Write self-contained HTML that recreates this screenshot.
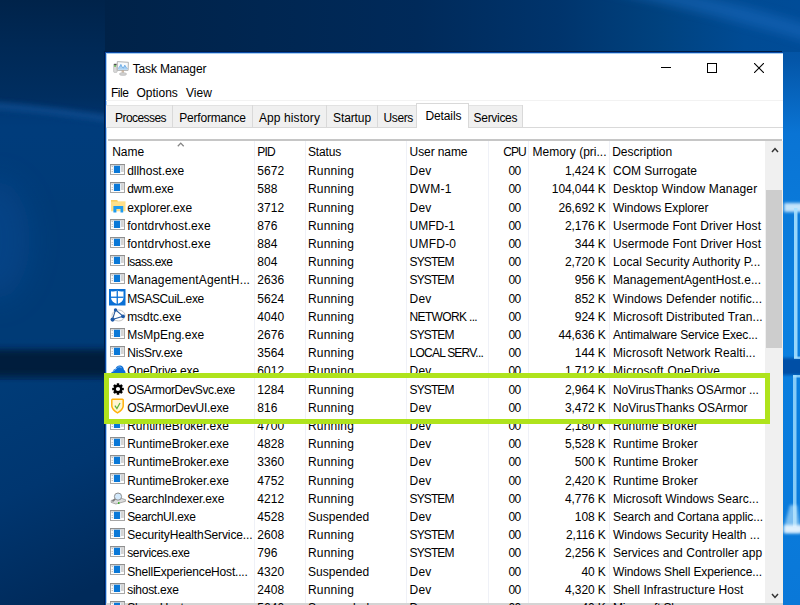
<!DOCTYPE html>
<html><head><meta charset="utf-8">
<style>
*{margin:0;padding:0;box-sizing:border-box}
html,body{width:800px;height:605px;overflow:hidden}
body{position:relative;font-family:"Liberation Sans",sans-serif;font-size:12px;color:#000;background:#0a4284}
.bg{position:absolute;left:0;top:0;width:800px;height:605px}
.win{position:absolute;left:105px;top:52px;width:678px;height:560px;background:#fff;border-left:1px solid #0a4aa6;border-top:1px solid #0a4aa6;box-shadow:-1px -1px 0 #001c44, inset 1px 1px 0 #a6cdf2}
.t{position:absolute;white-space:nowrap;line-height:12px;font-size:12px;color:#000}
.r{text-align:right}
.ln{position:absolute}
svg{position:absolute;display:block}
</style></head>
<body>
<svg class="bg" width="800" height="605" viewBox="0 0 800 605" style="left:0;top:0">
<defs>
<linearGradient id="gtop" gradientUnits="userSpaceOnUse" x1="105" y1="0" x2="800" y2="0">
<stop offset="0" stop-color="#002248"/><stop offset="0.45" stop-color="#002a5a"/><stop offset="0.65" stop-color="#00346c"/><stop offset="0.8" stop-color="#00427f"/><stop offset="0.92" stop-color="#004b94"/><stop offset="1" stop-color="#004c98"/>
</linearGradient>
<linearGradient id="gtopv" x1="0" y1="0" x2="0" y2="1">
<stop offset="0" stop-color="#001a3c" stop-opacity="0.35"/><stop offset="1" stop-color="#001a3c" stop-opacity="0"/>
</linearGradient>
<linearGradient id="gl" gradientUnits="userSpaceOnUse" x1="0" y1="0" x2="0" y2="605">
<stop offset="0" stop-color="#00234a"/><stop offset="0.08" stop-color="#002956"/><stop offset="0.16" stop-color="#002e60"/><stop offset="0.21" stop-color="#003570"/><stop offset="0.35" stop-color="#003468"/><stop offset="1" stop-color="#003264"/>
</linearGradient>
<linearGradient id="gll" x1="0" y1="0" x2="0.3" y2="1">
<stop offset="0" stop-color="#003c78"/><stop offset="0.5" stop-color="#003670"/><stop offset="1" stop-color="#002a5a"/>
</linearGradient>
<linearGradient id="gr" x1="0" y1="0" x2="0" y2="1">
<stop offset="0" stop-color="#004c98"/><stop offset="0.1" stop-color="#0456a8"/><stop offset="0.22" stop-color="#0a74d4"/><stop offset="0.5" stop-color="#0a80e0"/><stop offset="1" stop-color="#0a78d8"/>
</linearGradient>
<filter id="bl" x="-50%" y="-50%" width="200%" height="200%"><feGaussianBlur stdDeviation="5"/></filter>
<filter id="bl3" x="-50%" y="-50%" width="200%" height="200%"><feGaussianBlur stdDeviation="3"/></filter>
<filter id="bl15" x="-100%" y="-100%" width="300%" height="300%"><feGaussianBlur stdDeviation="15"/></filter>
<filter id="bl1" x="-50%" y="-50%" width="200%" height="200%"><feGaussianBlur stdDeviation="0.7"/></filter>
<filter id="bl2" x="-50%" y="-50%" width="200%" height="200%"><feGaussianBlur stdDeviation="1.5"/></filter>
</defs>
<rect x="0" y="0" width="110" height="605" fill="url(#gl)"/>
<path d="M-20 105 Q50 110 130 123 L130 350 L-20 350 Z" fill="#00448a" opacity="0.45" filter="url(#bl)"/>
<ellipse cx="-5" cy="240" rx="35" ry="60" fill="#0a4e98" opacity="0.45" filter="url(#bl15)"/>
<path d="M-20 104.5 Q50 109.5 130 122" fill="none" stroke="#1e64b0" stroke-width="5" opacity="0.6" filter="url(#bl3)"/>
<rect x="-20" y="380" width="150" height="240" fill="url(#gll)"/>
<rect x="-20" y="350" width="150" height="26" fill="#001a3a" opacity="0.95" filter="url(#bl3)"/>
<rect x="780" y="0" width="25" height="605" fill="url(#gr)"/>
<rect x="780" y="358" width="25" height="17" fill="#0350a6" filter="url(#bl2)"/>
<rect x="784" y="203" width="20" height="9" fill="#d8f0ff" opacity="0.9" filter="url(#bl2)"/>
<rect x="794" y="208" width="3.5" height="150" fill="#a6e0ff" opacity="0.9" filter="url(#bl1)"/>
<rect x="794" y="356.5" width="8" height="2.5" fill="#a6e0ff" opacity="0.8" filter="url(#bl1)"/>
<rect x="793" y="375" width="3.5" height="152" fill="#a6e0ff" opacity="0.8" filter="url(#bl1)"/>
<rect x="793" y="375" width="8" height="2.5" fill="#a6e0ff" opacity="0.8" filter="url(#bl1)"/>
<path d="M790 505 L797 505 L800 527 L800 533 L784 533 L784 527 Z" fill="#c8ecff" opacity="0.6" filter="url(#bl2)"/>
<rect x="784" y="525" width="20" height="8" fill="#eaf6ff" opacity="0.9" filter="url(#bl2)"/>
<rect x="105" y="0" width="700" height="52" fill="url(#gtop)"/>
<path d="M600 -10 Q700 10 820 45 L820 28 Q720 -2 670 -10Z" fill="#1e6cc0" opacity="0.5" filter="url(#bl)"/>
</svg>
<div class="win"></div>
<svg style="left:113px;top:60.5px" width="16" height="15" viewBox="0 0 16 15">
<rect x="0.6" y="2.8" width="3.6" height="8.6" rx="0.8" fill="#d9d9d9" stroke="#a8a8a8" stroke-width="0.5"/>
<rect x="1.1" y="3.1" width="2.4" height="1.1" fill="#3a3a3a"/><rect x="1.3" y="4.3" width="1.5" height="1.4" fill="#3cb521"/>
<path d="M4.3 0.6 L15.4 1.3 L15.1 9.4 L4.3 9.4 Z" fill="#f6f9fc" stroke="#a9a9a9" stroke-width="0.9"/>
<path d="M5.2 7.2 L6.6 6 L7.9 3.4 L9.1 6.2 L10.4 7 L11.8 4.2 L13.2 6.4 L14.4 7.6 V8.8 H5.2 Z" fill="#a9d0f2"/>
<path d="M5.2 7.2 L6.6 6 L7.9 3.4 L9.1 6.2 L10.4 7 L11.8 4.2 L13.2 6.4 L14.4 7.6" fill="none" stroke="#4a98de" stroke-width="0.7"/>
<rect x="8.6" y="9.4" width="2.4" height="2.4" fill="#c0a080" opacity="0.7"/>
<ellipse cx="10" cy="13" rx="3.6" ry="1.5" fill="#cfcfcf" stroke="#aaa" stroke-width="0.4"/>
</svg>
<div class="t" style="left:132.7px;top:63.04px;font-size:12px;line-height:12px;color:#000;letter-spacing:-0.15px">Task Manager</div>
<div class="ln" style="left:661px;top:67px;width:10px;height:1px;background:#000"></div>
<div class="ln" style="left:707px;top:62.5px;width:10px;height:10px;border:1px solid #000"></div>
<svg style="left:754px;top:62.5px" width="10" height="10" viewBox="0 0 10 10"><path d="M0 0 L10 10 M10 0 L0 10" stroke="#000" stroke-width="1.1"/></svg>
<div class="t" style="left:111px;top:87.04px;font-size:12px;line-height:12px;color:#000;letter-spacing:-0.5px">File</div>
<div class="t" style="left:136.5px;top:87.04px;font-size:12px;line-height:12px;color:#000;">Options</div>
<div class="t" style="left:186px;top:87.04px;font-size:12px;line-height:12px;color:#000;">View</div>
<div class="ln" style="left:106px;top:100px;width:677px;height:1px;background:#f2f2f2"></div>
<div class="ln" style="left:106px;top:105px;width:66px;height:22px;background:#f0f0f0"></div>
<div class="ln" style="left:106px;top:105px;width:66px;height:1px;background:#e2e2e2"></div>
<div class="ln" style="left:172px;top:105px;width:1px;height:22px;background:#d9d9d9"></div>
<div class="t" style="left:115px;top:111.84px;font-size:12px;line-height:12px;color:#000;letter-spacing:-0.56px">Processes</div>
<div class="ln" style="left:173px;top:105px;width:79px;height:22px;background:#f0f0f0"></div>
<div class="ln" style="left:173px;top:105px;width:79px;height:1px;background:#e2e2e2"></div>
<div class="ln" style="left:252px;top:105px;width:1px;height:22px;background:#d9d9d9"></div>
<div class="t" style="left:179.25px;top:111.84px;font-size:12px;line-height:12px;color:#000;letter-spacing:-0.2px">Performance</div>
<div class="ln" style="left:253px;top:105px;width:73px;height:22px;background:#f0f0f0"></div>
<div class="ln" style="left:253px;top:105px;width:73px;height:1px;background:#e2e2e2"></div>
<div class="ln" style="left:326px;top:105px;width:1px;height:22px;background:#d9d9d9"></div>
<div class="t" style="left:259px;top:111.84px;font-size:12px;line-height:12px;color:#000;letter-spacing:0.09px">App history</div>
<div class="ln" style="left:327px;top:105px;width:50px;height:22px;background:#f0f0f0"></div>
<div class="ln" style="left:327px;top:105px;width:50px;height:1px;background:#e2e2e2"></div>
<div class="ln" style="left:377px;top:105px;width:1px;height:22px;background:#d9d9d9"></div>
<div class="t" style="left:333px;top:111.84px;font-size:12px;line-height:12px;color:#000;letter-spacing:-0.1px">Startup</div>
<div class="ln" style="left:378px;top:105px;width:38px;height:22px;background:#f0f0f0"></div>
<div class="ln" style="left:378px;top:105px;width:38px;height:1px;background:#e2e2e2"></div>
<div class="ln" style="left:416px;top:105px;width:1px;height:22px;background:#d9d9d9"></div>
<div class="t" style="left:383.6px;top:111.84px;font-size:12px;line-height:12px;color:#000;letter-spacing:-0.43px">Users</div>
<div class="ln" style="left:469px;top:105px;width:53px;height:22px;background:#f0f0f0"></div>
<div class="ln" style="left:469px;top:105px;width:53px;height:1px;background:#e2e2e2"></div>
<div class="ln" style="left:522px;top:105px;width:1px;height:22px;background:#d9d9d9"></div>
<div class="t" style="left:473.6px;top:111.84px;font-size:12px;line-height:12px;color:#000;letter-spacing:-0.31px">Services</div>
<div class="ln" style="left:106px;top:127px;width:677px;height:1px;background:#d9d9d9"></div>
<div class="ln" style="left:416px;top:103px;width:53px;height:25px;background:#fff;border:1px solid #d9d9d9;border-bottom:none"></div>
<div class="t" style="left:425.4px;top:109.74px;font-size:12px;line-height:12px;color:#000;letter-spacing:-0.1px">Details</div>
<div class="ln" style="left:108px;top:139px;width:674px;height:2px;background:#c6c6c6"></div>
<div class="ln" style="left:254px;top:141px;width:1px;height:470px;background:#eff1f7"></div>
<div class="ln" style="left:305px;top:141px;width:1px;height:470px;background:#eff1f7"></div>
<div class="ln" style="left:406px;top:141px;width:1px;height:470px;background:#eff1f7"></div>
<div class="ln" style="left:488px;top:141px;width:1px;height:470px;background:#eff1f7"></div>
<div class="ln" style="left:528px;top:141px;width:1px;height:470px;background:#eff1f7"></div>
<div class="ln" style="left:609px;top:141px;width:1px;height:470px;background:#eff1f7"></div>
<div class="t" style="left:112.2px;top:146.24px;font-size:12px;line-height:12px;color:#000;">Name</div>
<svg style="left:177px;top:141.5px" width="8" height="5" viewBox="0 0 8 5"><path d="M0.8 4.2 L3.75 1.1 L6.7 4.2" fill="none" stroke="#858585" stroke-width="1.3"/></svg>
<div class="t" style="left:257.2px;top:146.24px;font-size:12px;line-height:12px;color:#000;letter-spacing:-0.75px">PID</div>
<div class="t" style="left:307.9px;top:146.24px;font-size:12px;line-height:12px;color:#000;letter-spacing:-0.15px">Status</div>
<div class="t" style="left:409.6px;top:146.24px;font-size:12px;line-height:12px;color:#000;letter-spacing:-0.1px">User name</div>
<div class="t r" style="left:325.9px;width:200px;top:146.24px;font-size:12px;line-height:12px;color:#000;letter-spacing:-0.9px">CPU</div>
<div class="t" style="left:532.5px;top:146.24px;font-size:12px;line-height:12px;color:#000;">Memory (pri...</div>
<div class="t" style="left:612.2px;top:146.24px;font-size:12px;line-height:12px;color:#000;">Description</div>
<div class="ln" style="left:765px;top:141px;width:17px;height:470px;background:#f0f0f0"></div>
<div class="ln" style="left:766px;top:190px;width:16px;height:158px;background:#cdcdcd"></div>
<div class="ln" style="left:782px;top:141px;width:1px;height:470px;background:#f8efe4"></div>
<svg style="left:771px;top:146.5px" width="8" height="6" viewBox="0 0 8 6"><path d="M1 5 L4 1.6 L7 5" fill="none" stroke="#333" stroke-width="1.5"/></svg>
<svg style="left:771px;top:593px" width="8" height="6" viewBox="0 0 8 6"><path d="M1 1 L4 4.4 L7 1" fill="none" stroke="#333" stroke-width="1.5"/></svg>
<div class="ln" style="left:106px;top:603px;width:677px;height:2px;background:#d4d4d4"></div>
<svg style="left:110.2px;top:164.00px" width="15" height="11" viewBox="0 0 15 11"><rect x="0.5" y="0.5" width="14" height="10" fill="#fdfdfd" stroke="#a6a6a6"/><rect x="0" y="0" width="15" height="1.3" fill="#8f8f8f"/><rect x="3.9" y="1.75" width="6.2" height="7.25" fill="#0a78d7"/><rect x="11" y="1.5" width="2.75" height="6.5" fill="#d4d4d4"/><circle cx="2.2" cy="2.6" r="0.55" fill="#9a9a9a"/><circle cx="2.2" cy="5.2" r="0.55" fill="#9a9a9a"/><circle cx="2.2" cy="7.6" r="0.55" fill="#9a9a9a"/></svg>
<div class="t" style="left:127.2px;top:165.24px;font-size:12px;line-height:12px;color:#000;letter-spacing:-0.030px">dllhost.exe</div>
<div class="t" style="left:257.2px;top:165.24px;font-size:12px;line-height:12px;color:#000;letter-spacing:0.1px">5672</div>
<div class="t" style="left:307.9px;top:165.24px;font-size:12px;line-height:12px;color:#000;letter-spacing:0.217px">Running</div>
<div class="t" style="left:409.6px;top:165.24px;font-size:12px;line-height:12px;color:#000;letter-spacing:0.150px">Dev</div>
<div class="t r" style="left:320.5px;width:200px;top:165.24px;font-size:12px;line-height:12px;color:#000;letter-spacing:-0.7px">00</div>
<div class="t r" style="left:405.70000000000005px;width:200px;top:165.24px;font-size:12px;line-height:12px;color:#000;letter-spacing:-0.1px">1,424 K</div>
<div class="t" style="left:613px;top:165.24px;font-size:12px;line-height:12px;color:#000;letter-spacing:0.000px">COM Surrogate</div>
<svg style="left:110.2px;top:182.20px" width="15" height="11" viewBox="0 0 15 11"><rect x="0.5" y="0.5" width="14" height="10" fill="#fdfdfd" stroke="#a6a6a6"/><rect x="0" y="0" width="15" height="1.3" fill="#8f8f8f"/><rect x="3.9" y="1.75" width="6.2" height="7.25" fill="#0a78d7"/><rect x="11" y="1.5" width="2.75" height="6.5" fill="#d4d4d4"/><circle cx="2.2" cy="2.6" r="0.55" fill="#9a9a9a"/><circle cx="2.2" cy="5.2" r="0.55" fill="#9a9a9a"/><circle cx="2.2" cy="7.6" r="0.55" fill="#9a9a9a"/></svg>
<div class="t" style="left:127.2px;top:183.44px;font-size:12px;line-height:12px;color:#000;letter-spacing:-0.250px">dwm.exe</div>
<div class="t" style="left:257.2px;top:183.44px;font-size:12px;line-height:12px;color:#000;letter-spacing:0.1px">588</div>
<div class="t" style="left:307.9px;top:183.44px;font-size:12px;line-height:12px;color:#000;letter-spacing:0.217px">Running</div>
<div class="t" style="left:409.6px;top:183.44px;font-size:12px;line-height:12px;color:#000;letter-spacing:0.275px">DWM-1</div>
<div class="t r" style="left:320.5px;width:200px;top:183.44px;font-size:12px;line-height:12px;color:#000;letter-spacing:-0.7px">00</div>
<div class="t r" style="left:405.70000000000005px;width:200px;top:183.44px;font-size:12px;line-height:12px;color:#000;letter-spacing:-0.1px">104,044 K</div>
<div class="t" style="left:613px;top:183.44px;font-size:12px;line-height:12px;color:#000;letter-spacing:0.162px">Desktop Window Manager</div>
<svg style="left:110.5px;top:200.00px" width="15" height="13" viewBox="0 0 15 13"><path d="M0 0.3 h6.3 l0.9 2 h-7.2z" fill="#f6bd2a"/><rect x="0" y="1.3" width="14.5" height="10" fill="#ffe08a"/><path d="M2.4 6 h9.8 v6.5 h-2.7 v-3.6 h-4.1 v3.6 h-3z" fill="#1e9bf0"/></svg>
<div class="t" style="left:127.2px;top:201.64px;font-size:12px;line-height:12px;color:#000;letter-spacing:-0.027px">explorer.exe</div>
<div class="t" style="left:257.2px;top:201.64px;font-size:12px;line-height:12px;color:#000;letter-spacing:0.1px">3712</div>
<div class="t" style="left:307.9px;top:201.64px;font-size:12px;line-height:12px;color:#000;letter-spacing:0.217px">Running</div>
<div class="t" style="left:409.6px;top:201.64px;font-size:12px;line-height:12px;color:#000;letter-spacing:0.150px">Dev</div>
<div class="t r" style="left:320.5px;width:200px;top:201.64px;font-size:12px;line-height:12px;color:#000;letter-spacing:-0.7px">00</div>
<div class="t r" style="left:405.70000000000005px;width:200px;top:201.64px;font-size:12px;line-height:12px;color:#000;letter-spacing:-0.1px">26,692 K</div>
<div class="t" style="left:613px;top:201.64px;font-size:12px;line-height:12px;color:#000;letter-spacing:-0.087px">Windows Explorer</div>
<svg style="left:110.2px;top:218.60px" width="15" height="11" viewBox="0 0 15 11"><rect x="0.5" y="0.5" width="14" height="10" fill="#fdfdfd" stroke="#a6a6a6"/><rect x="0" y="0" width="15" height="1.3" fill="#8f8f8f"/><rect x="3.9" y="1.75" width="6.2" height="7.25" fill="#0a78d7"/><rect x="11" y="1.5" width="2.75" height="6.5" fill="#d4d4d4"/><circle cx="2.2" cy="2.6" r="0.55" fill="#9a9a9a"/><circle cx="2.2" cy="5.2" r="0.55" fill="#9a9a9a"/><circle cx="2.2" cy="7.6" r="0.55" fill="#9a9a9a"/></svg>
<div class="t" style="left:127.2px;top:219.84px;font-size:12px;line-height:12px;color:#000;letter-spacing:0.100px">fontdrvhost.exe</div>
<div class="t" style="left:257.2px;top:219.84px;font-size:12px;line-height:12px;color:#000;letter-spacing:0.1px">876</div>
<div class="t" style="left:307.9px;top:219.84px;font-size:12px;line-height:12px;color:#000;letter-spacing:0.217px">Running</div>
<div class="t" style="left:409.6px;top:219.84px;font-size:12px;line-height:12px;color:#000;letter-spacing:-0.020px">UMFD-1</div>
<div class="t r" style="left:320.5px;width:200px;top:219.84px;font-size:12px;line-height:12px;color:#000;letter-spacing:-0.7px">00</div>
<div class="t r" style="left:405.70000000000005px;width:200px;top:219.84px;font-size:12px;line-height:12px;color:#000;letter-spacing:-0.1px">2,176 K</div>
<div class="t" style="left:613px;top:219.84px;font-size:12px;line-height:12px;color:#000;letter-spacing:0.083px">Usermode Font Driver Host</div>
<svg style="left:110.2px;top:236.80px" width="15" height="11" viewBox="0 0 15 11"><rect x="0.5" y="0.5" width="14" height="10" fill="#fdfdfd" stroke="#a6a6a6"/><rect x="0" y="0" width="15" height="1.3" fill="#8f8f8f"/><rect x="3.9" y="1.75" width="6.2" height="7.25" fill="#0a78d7"/><rect x="11" y="1.5" width="2.75" height="6.5" fill="#d4d4d4"/><circle cx="2.2" cy="2.6" r="0.55" fill="#9a9a9a"/><circle cx="2.2" cy="5.2" r="0.55" fill="#9a9a9a"/><circle cx="2.2" cy="7.6" r="0.55" fill="#9a9a9a"/></svg>
<div class="t" style="left:127.2px;top:238.04px;font-size:12px;line-height:12px;color:#000;letter-spacing:0.100px">fontdrvhost.exe</div>
<div class="t" style="left:257.2px;top:238.04px;font-size:12px;line-height:12px;color:#000;letter-spacing:0.1px">884</div>
<div class="t" style="left:307.9px;top:238.04px;font-size:12px;line-height:12px;color:#000;letter-spacing:0.217px">Running</div>
<div class="t" style="left:409.6px;top:238.04px;font-size:12px;line-height:12px;color:#000;letter-spacing:0.220px">UMFD-0</div>
<div class="t r" style="left:320.5px;width:200px;top:238.04px;font-size:12px;line-height:12px;color:#000;letter-spacing:-0.7px">00</div>
<div class="t r" style="left:405.70000000000005px;width:200px;top:238.04px;font-size:12px;line-height:12px;color:#000;letter-spacing:-0.1px">344 K</div>
<div class="t" style="left:613px;top:238.04px;font-size:12px;line-height:12px;color:#000;letter-spacing:0.083px">Usermode Font Driver Host</div>
<svg style="left:110.2px;top:255.00px" width="15" height="11" viewBox="0 0 15 11"><rect x="0.5" y="0.5" width="14" height="10" fill="#fdfdfd" stroke="#a6a6a6"/><rect x="0" y="0" width="15" height="1.3" fill="#8f8f8f"/><rect x="3.9" y="1.75" width="6.2" height="7.25" fill="#0a78d7"/><rect x="11" y="1.5" width="2.75" height="6.5" fill="#d4d4d4"/><circle cx="2.2" cy="2.6" r="0.55" fill="#9a9a9a"/><circle cx="2.2" cy="5.2" r="0.55" fill="#9a9a9a"/><circle cx="2.2" cy="7.6" r="0.55" fill="#9a9a9a"/></svg>
<div class="t" style="left:127.2px;top:256.24px;font-size:12px;line-height:12px;color:#000;letter-spacing:-0.538px">lsass.exe</div>
<div class="t" style="left:257.2px;top:256.24px;font-size:12px;line-height:12px;color:#000;letter-spacing:0.1px">804</div>
<div class="t" style="left:307.9px;top:256.24px;font-size:12px;line-height:12px;color:#000;letter-spacing:0.217px">Running</div>
<div class="t" style="left:409.6px;top:256.24px;font-size:12px;line-height:12px;color:#000;letter-spacing:-0.900px">SYSTEM</div>
<div class="t r" style="left:320.5px;width:200px;top:256.24px;font-size:12px;line-height:12px;color:#000;letter-spacing:-0.7px">00</div>
<div class="t r" style="left:405.70000000000005px;width:200px;top:256.24px;font-size:12px;line-height:12px;color:#000;letter-spacing:-0.1px">2,720 K</div>
<div class="t" style="left:613px;top:256.24px;font-size:12px;line-height:12px;color:#000;letter-spacing:0.079px">Local Security Authority P...</div>
<svg style="left:110.2px;top:273.20px" width="15" height="11" viewBox="0 0 15 11"><rect x="0.5" y="0.5" width="14" height="10" fill="#fdfdfd" stroke="#a6a6a6"/><rect x="0" y="0" width="15" height="1.3" fill="#8f8f8f"/><rect x="3.9" y="1.75" width="6.2" height="7.25" fill="#0a78d7"/><rect x="11" y="1.5" width="2.75" height="6.5" fill="#d4d4d4"/><circle cx="2.2" cy="2.6" r="0.55" fill="#9a9a9a"/><circle cx="2.2" cy="5.2" r="0.55" fill="#9a9a9a"/><circle cx="2.2" cy="7.6" r="0.55" fill="#9a9a9a"/></svg>
<div class="t" style="left:127.2px;top:274.44px;font-size:12px;line-height:12px;color:#000;letter-spacing:0.150px">ManagementAgentH...</div>
<div class="t" style="left:257.2px;top:274.44px;font-size:12px;line-height:12px;color:#000;letter-spacing:0.1px">2636</div>
<div class="t" style="left:307.9px;top:274.44px;font-size:12px;line-height:12px;color:#000;letter-spacing:0.217px">Running</div>
<div class="t" style="left:409.6px;top:274.44px;font-size:12px;line-height:12px;color:#000;letter-spacing:-0.900px">SYSTEM</div>
<div class="t r" style="left:320.5px;width:200px;top:274.44px;font-size:12px;line-height:12px;color:#000;letter-spacing:-0.7px">00</div>
<div class="t r" style="left:405.70000000000005px;width:200px;top:274.44px;font-size:12px;line-height:12px;color:#000;letter-spacing:-0.1px">956 K</div>
<div class="t" style="left:613px;top:274.44px;font-size:12px;line-height:12px;color:#000;letter-spacing:0.087px">ManagementAgentHost.e...</div>
<svg style="left:109.3px;top:289.00px" width="17" height="17" viewBox="0 0 17 17"><rect x="0" y="0" width="16.5" height="16.5" fill="#0a70d6"/><path d="M2 2.3 q3 0.6 6.25 -0.6 q3.25 1.2 6.25 0.6 v6.7 q-0.6 4.3 -6.25 6 q-5.65 -1.7 -6.25 -6z" fill="#fff"/><rect x="7.6" y="1.8" width="1.3" height="13.5" fill="#0a70d6"/><rect x="2" y="7.6" width="12.5" height="1.3" fill="#0a70d6"/></svg>
<div class="t" style="left:127.2px;top:292.64px;font-size:12px;line-height:12px;color:#000;letter-spacing:-0.400px">MSASCuiL.exe</div>
<div class="t" style="left:257.2px;top:292.64px;font-size:12px;line-height:12px;color:#000;letter-spacing:0.1px">5624</div>
<div class="t" style="left:307.9px;top:292.64px;font-size:12px;line-height:12px;color:#000;letter-spacing:0.217px">Running</div>
<div class="t" style="left:409.6px;top:292.64px;font-size:12px;line-height:12px;color:#000;letter-spacing:0.150px">Dev</div>
<div class="t r" style="left:320.5px;width:200px;top:292.64px;font-size:12px;line-height:12px;color:#000;letter-spacing:-0.7px">00</div>
<div class="t r" style="left:405.70000000000005px;width:200px;top:292.64px;font-size:12px;line-height:12px;color:#000;letter-spacing:-0.1px">852 K</div>
<div class="t" style="left:613px;top:292.64px;font-size:12px;line-height:12px;color:#000;letter-spacing:0.115px">Windows Defender notific...</div>
<svg style="left:110px;top:307.50px" width="16" height="15" viewBox="0 0 16 15"><ellipse cx="8.5" cy="7.5" rx="6.5" ry="5.5" fill="none" stroke="#b8b8b8" stroke-width="0.8"/><path d="M5.5 1.8 L2.5 11.5 L13 8.2 Z" fill="none" stroke="#2a5c9c" stroke-width="1.1"/><circle cx="5.5" cy="2" r="1.7" fill="#1e5aa8"/><circle cx="2.6" cy="11.6" r="2.1" fill="#1e5aa8"/><circle cx="13" cy="8.3" r="1.9" fill="#1e5aa8"/></svg>
<div class="t" style="left:127.2px;top:310.84px;font-size:12px;line-height:12px;color:#000;letter-spacing:-0.062px">msdtc.exe</div>
<div class="t" style="left:257.2px;top:310.84px;font-size:12px;line-height:12px;color:#000;letter-spacing:0.1px">4040</div>
<div class="t" style="left:307.9px;top:310.84px;font-size:12px;line-height:12px;color:#000;letter-spacing:0.217px">Running</div>
<div class="t" style="left:409.6px;top:310.84px;font-size:12px;line-height:12px;color:#000;letter-spacing:-0.660px">NETWORK ...</div>
<div class="t r" style="left:320.5px;width:200px;top:310.84px;font-size:12px;line-height:12px;color:#000;letter-spacing:-0.7px">00</div>
<div class="t r" style="left:405.70000000000005px;width:200px;top:310.84px;font-size:12px;line-height:12px;color:#000;letter-spacing:-0.1px">924 K</div>
<div class="t" style="left:613px;top:310.84px;font-size:12px;line-height:12px;color:#000;letter-spacing:0.107px">Microsoft Distributed Tran...</div>
<svg style="left:110.2px;top:327.80px" width="15" height="11" viewBox="0 0 15 11"><rect x="0.5" y="0.5" width="14" height="10" fill="#fdfdfd" stroke="#a6a6a6"/><rect x="0" y="0" width="15" height="1.3" fill="#8f8f8f"/><rect x="3.9" y="1.75" width="6.2" height="7.25" fill="#0a78d7"/><rect x="11" y="1.5" width="2.75" height="6.5" fill="#d4d4d4"/><circle cx="2.2" cy="2.6" r="0.55" fill="#9a9a9a"/><circle cx="2.2" cy="5.2" r="0.55" fill="#9a9a9a"/><circle cx="2.2" cy="7.6" r="0.55" fill="#9a9a9a"/></svg>
<div class="t" style="left:127.2px;top:329.04px;font-size:12px;line-height:12px;color:#000;letter-spacing:0.020px">MsMpEng.exe</div>
<div class="t" style="left:257.2px;top:329.04px;font-size:12px;line-height:12px;color:#000;letter-spacing:0.1px">2676</div>
<div class="t" style="left:307.9px;top:329.04px;font-size:12px;line-height:12px;color:#000;letter-spacing:0.217px">Running</div>
<div class="t" style="left:409.6px;top:329.04px;font-size:12px;line-height:12px;color:#000;letter-spacing:-0.900px">SYSTEM</div>
<div class="t r" style="left:320.5px;width:200px;top:329.04px;font-size:12px;line-height:12px;color:#000;letter-spacing:-0.7px">00</div>
<div class="t r" style="left:405.70000000000005px;width:200px;top:329.04px;font-size:12px;line-height:12px;color:#000;letter-spacing:-0.1px">44,636 K</div>
<div class="t" style="left:613px;top:329.04px;font-size:12px;line-height:12px;color:#000;letter-spacing:-0.177px">Antimalware Service Exec...</div>
<svg style="left:110.2px;top:346.00px" width="15" height="11" viewBox="0 0 15 11"><rect x="0.5" y="0.5" width="14" height="10" fill="#fdfdfd" stroke="#a6a6a6"/><rect x="0" y="0" width="15" height="1.3" fill="#8f8f8f"/><rect x="3.9" y="1.75" width="6.2" height="7.25" fill="#0a78d7"/><rect x="11" y="1.5" width="2.75" height="6.5" fill="#d4d4d4"/><circle cx="2.2" cy="2.6" r="0.55" fill="#9a9a9a"/><circle cx="2.2" cy="5.2" r="0.55" fill="#9a9a9a"/><circle cx="2.2" cy="7.6" r="0.55" fill="#9a9a9a"/></svg>
<div class="t" style="left:127.2px;top:347.24px;font-size:12px;line-height:12px;color:#000;letter-spacing:-0.189px">NisSrv.exe</div>
<div class="t" style="left:257.2px;top:347.24px;font-size:12px;line-height:12px;color:#000;letter-spacing:0.1px">3564</div>
<div class="t" style="left:307.9px;top:347.24px;font-size:12px;line-height:12px;color:#000;letter-spacing:0.217px">Running</div>
<div class="t" style="left:409.6px;top:347.24px;font-size:12px;line-height:12px;color:#000;letter-spacing:-0.783px">LOCAL SERV...</div>
<div class="t r" style="left:320.5px;width:200px;top:347.24px;font-size:12px;line-height:12px;color:#000;letter-spacing:-0.7px">00</div>
<div class="t r" style="left:405.70000000000005px;width:200px;top:347.24px;font-size:12px;line-height:12px;color:#000;letter-spacing:-0.1px">144 K</div>
<div class="t" style="left:613px;top:347.24px;font-size:12px;line-height:12px;color:#000;letter-spacing:0.100px">Microsoft Network Realti...</div>
<svg style="left:109.5px;top:364.10px" width="16" height="12" viewBox="0 0 16 12"><path d="M0.5 11 q0 -3 2.5 -3.5 q0.3 -2.6 2.6 -2.8 q1.3 -3.8 5 -3.2 q3 0.8 3.3 4.3 q2 1.2 1.8 5.2z" fill="#0b6fd8"/><path d="M3.5 7.5 q1.5 -2.5 3.5 -3.3 M7.2 3.2 q2.5 -1 4.5 0.5" fill="none" stroke="#bcd9f5" stroke-width="0.6"/></svg>
<div class="t" style="left:127.2px;top:365.44px;font-size:12px;line-height:12px;color:#000;letter-spacing:-0.127px">OneDrive.exe</div>
<div class="t" style="left:257.2px;top:365.44px;font-size:12px;line-height:12px;color:#000;letter-spacing:0.1px">6012</div>
<div class="t" style="left:307.9px;top:365.44px;font-size:12px;line-height:12px;color:#000;letter-spacing:0.217px">Running</div>
<div class="t" style="left:409.6px;top:365.44px;font-size:12px;line-height:12px;color:#000;letter-spacing:0.150px">Dev</div>
<div class="t r" style="left:320.5px;width:200px;top:365.44px;font-size:12px;line-height:12px;color:#000;letter-spacing:-0.7px">00</div>
<div class="t r" style="left:405.70000000000005px;width:200px;top:365.44px;font-size:12px;line-height:12px;color:#000;letter-spacing:-0.1px">1,712 K</div>
<div class="t" style="left:613px;top:365.44px;font-size:12px;line-height:12px;color:#000;letter-spacing:0.247px">Microsoft OneDrive</div>
<svg style="left:111.5px;top:383.00px" width="12" height="12" viewBox="0 0 12 12"><g fill="#000"><circle cx="6" cy="6" r="4.3"/><rect x="4.7" y="0.2" width="2.6" height="11.6" rx="0.6"/><rect x="4.7" y="0.2" width="2.6" height="11.6" rx="0.6" transform="rotate(45 6 6)"/><rect x="4.7" y="0.2" width="2.6" height="11.6" rx="0.6" transform="rotate(90 6 6)"/><rect x="4.7" y="0.2" width="2.6" height="11.6" rx="0.6" transform="rotate(135 6 6)"/></g><circle cx="6" cy="6" r="2.1" fill="#fff"/></svg>
<div class="t" style="left:127.2px;top:383.64px;font-size:12px;line-height:12px;color:#000;letter-spacing:-0.375px">OSArmorDevSvc.exe</div>
<div class="t" style="left:257.2px;top:383.64px;font-size:12px;line-height:12px;color:#000;letter-spacing:0.1px">1284</div>
<div class="t" style="left:307.9px;top:383.64px;font-size:12px;line-height:12px;color:#000;letter-spacing:0.217px">Running</div>
<div class="t" style="left:409.6px;top:383.64px;font-size:12px;line-height:12px;color:#000;letter-spacing:-0.900px">SYSTEM</div>
<div class="t r" style="left:320.5px;width:200px;top:383.64px;font-size:12px;line-height:12px;color:#000;letter-spacing:-0.7px">00</div>
<div class="t r" style="left:405.70000000000005px;width:200px;top:383.64px;font-size:12px;line-height:12px;color:#000;letter-spacing:-0.1px">2,964 K</div>
<div class="t" style="left:613px;top:383.64px;font-size:12px;line-height:12px;color:#000;letter-spacing:-0.113px">NoVirusThanks OSArmor ...</div>
<svg style="left:111.2px;top:398.40px" width="13" height="16" viewBox="0 0 13 16"><path d="M1.5 1.2 H11.5 Q12.2 1.2 12.2 2 V8.2 Q11.6 12.3 6.5 14.8 Q1.4 12.3 0.8 8.2 V2 Q0.8 1.2 1.5 1.2 Z" fill="#fff6d2" stroke="#ffb20a" stroke-width="1.5"/><path d="M3.9 7.6 L5.9 10.6 L9 5" fill="none" stroke="#5fb23a" stroke-width="1.2"/></svg>
<div class="t" style="left:127.2px;top:401.84px;font-size:12px;line-height:12px;color:#000;letter-spacing:-0.293px">OSArmorDevUI.exe</div>
<div class="t" style="left:257.2px;top:401.84px;font-size:12px;line-height:12px;color:#000;letter-spacing:0.1px">816</div>
<div class="t" style="left:307.9px;top:401.84px;font-size:12px;line-height:12px;color:#000;letter-spacing:0.217px">Running</div>
<div class="t" style="left:409.6px;top:401.84px;font-size:12px;line-height:12px;color:#000;letter-spacing:0.150px">Dev</div>
<div class="t r" style="left:320.5px;width:200px;top:401.84px;font-size:12px;line-height:12px;color:#000;letter-spacing:-0.7px">00</div>
<div class="t r" style="left:405.70000000000005px;width:200px;top:401.84px;font-size:12px;line-height:12px;color:#000;letter-spacing:-0.1px">3,472 K</div>
<div class="t" style="left:613px;top:401.84px;font-size:12px;line-height:12px;color:#000;letter-spacing:-0.030px">NoVirusThanks OSArmor</div>
<svg style="left:110.2px;top:418.80px" width="15" height="11" viewBox="0 0 15 11"><rect x="0.5" y="0.5" width="14" height="10" fill="#fdfdfd" stroke="#a6a6a6"/><rect x="0" y="0" width="15" height="1.3" fill="#8f8f8f"/><rect x="3.9" y="1.75" width="6.2" height="7.25" fill="#0a78d7"/><rect x="11" y="1.5" width="2.75" height="6.5" fill="#d4d4d4"/><circle cx="2.2" cy="2.6" r="0.55" fill="#9a9a9a"/><circle cx="2.2" cy="5.2" r="0.55" fill="#9a9a9a"/><circle cx="2.2" cy="7.6" r="0.55" fill="#9a9a9a"/></svg>
<div class="t" style="left:127.2px;top:420.04px;font-size:12px;line-height:12px;color:#000;letter-spacing:-0.019px">RuntimeBroker.exe</div>
<div class="t" style="left:257.2px;top:420.04px;font-size:12px;line-height:12px;color:#000;letter-spacing:0.1px">4700</div>
<div class="t" style="left:307.9px;top:420.04px;font-size:12px;line-height:12px;color:#000;letter-spacing:0.217px">Running</div>
<div class="t" style="left:409.6px;top:420.04px;font-size:12px;line-height:12px;color:#000;letter-spacing:0.150px">Dev</div>
<div class="t r" style="left:320.5px;width:200px;top:420.04px;font-size:12px;line-height:12px;color:#000;letter-spacing:-0.7px">00</div>
<div class="t r" style="left:405.70000000000005px;width:200px;top:420.04px;font-size:12px;line-height:12px;color:#000;letter-spacing:-0.1px">2,180 K</div>
<div class="t" style="left:613px;top:420.04px;font-size:12px;line-height:12px;color:#000;letter-spacing:0.108px">Runtime Broker</div>
<svg style="left:110.2px;top:437.00px" width="15" height="11" viewBox="0 0 15 11"><rect x="0.5" y="0.5" width="14" height="10" fill="#fdfdfd" stroke="#a6a6a6"/><rect x="0" y="0" width="15" height="1.3" fill="#8f8f8f"/><rect x="3.9" y="1.75" width="6.2" height="7.25" fill="#0a78d7"/><rect x="11" y="1.5" width="2.75" height="6.5" fill="#d4d4d4"/><circle cx="2.2" cy="2.6" r="0.55" fill="#9a9a9a"/><circle cx="2.2" cy="5.2" r="0.55" fill="#9a9a9a"/><circle cx="2.2" cy="7.6" r="0.55" fill="#9a9a9a"/></svg>
<div class="t" style="left:127.2px;top:438.24px;font-size:12px;line-height:12px;color:#000;letter-spacing:-0.019px">RuntimeBroker.exe</div>
<div class="t" style="left:257.2px;top:438.24px;font-size:12px;line-height:12px;color:#000;letter-spacing:0.1px">4828</div>
<div class="t" style="left:307.9px;top:438.24px;font-size:12px;line-height:12px;color:#000;letter-spacing:0.217px">Running</div>
<div class="t" style="left:409.6px;top:438.24px;font-size:12px;line-height:12px;color:#000;letter-spacing:0.150px">Dev</div>
<div class="t r" style="left:320.5px;width:200px;top:438.24px;font-size:12px;line-height:12px;color:#000;letter-spacing:-0.7px">00</div>
<div class="t r" style="left:405.70000000000005px;width:200px;top:438.24px;font-size:12px;line-height:12px;color:#000;letter-spacing:-0.1px">5,528 K</div>
<div class="t" style="left:613px;top:438.24px;font-size:12px;line-height:12px;color:#000;letter-spacing:0.108px">Runtime Broker</div>
<svg style="left:110.2px;top:455.20px" width="15" height="11" viewBox="0 0 15 11"><rect x="0.5" y="0.5" width="14" height="10" fill="#fdfdfd" stroke="#a6a6a6"/><rect x="0" y="0" width="15" height="1.3" fill="#8f8f8f"/><rect x="3.9" y="1.75" width="6.2" height="7.25" fill="#0a78d7"/><rect x="11" y="1.5" width="2.75" height="6.5" fill="#d4d4d4"/><circle cx="2.2" cy="2.6" r="0.55" fill="#9a9a9a"/><circle cx="2.2" cy="5.2" r="0.55" fill="#9a9a9a"/><circle cx="2.2" cy="7.6" r="0.55" fill="#9a9a9a"/></svg>
<div class="t" style="left:127.2px;top:456.44px;font-size:12px;line-height:12px;color:#000;letter-spacing:-0.019px">RuntimeBroker.exe</div>
<div class="t" style="left:257.2px;top:456.44px;font-size:12px;line-height:12px;color:#000;letter-spacing:0.1px">3360</div>
<div class="t" style="left:307.9px;top:456.44px;font-size:12px;line-height:12px;color:#000;letter-spacing:0.217px">Running</div>
<div class="t" style="left:409.6px;top:456.44px;font-size:12px;line-height:12px;color:#000;letter-spacing:0.150px">Dev</div>
<div class="t r" style="left:320.5px;width:200px;top:456.44px;font-size:12px;line-height:12px;color:#000;letter-spacing:-0.7px">00</div>
<div class="t r" style="left:405.70000000000005px;width:200px;top:456.44px;font-size:12px;line-height:12px;color:#000;letter-spacing:-0.1px">500 K</div>
<div class="t" style="left:613px;top:456.44px;font-size:12px;line-height:12px;color:#000;letter-spacing:0.108px">Runtime Broker</div>
<svg style="left:110.2px;top:473.40px" width="15" height="11" viewBox="0 0 15 11"><rect x="0.5" y="0.5" width="14" height="10" fill="#fdfdfd" stroke="#a6a6a6"/><rect x="0" y="0" width="15" height="1.3" fill="#8f8f8f"/><rect x="3.9" y="1.75" width="6.2" height="7.25" fill="#0a78d7"/><rect x="11" y="1.5" width="2.75" height="6.5" fill="#d4d4d4"/><circle cx="2.2" cy="2.6" r="0.55" fill="#9a9a9a"/><circle cx="2.2" cy="5.2" r="0.55" fill="#9a9a9a"/><circle cx="2.2" cy="7.6" r="0.55" fill="#9a9a9a"/></svg>
<div class="t" style="left:127.2px;top:474.64px;font-size:12px;line-height:12px;color:#000;letter-spacing:-0.019px">RuntimeBroker.exe</div>
<div class="t" style="left:257.2px;top:474.64px;font-size:12px;line-height:12px;color:#000;letter-spacing:0.1px">4752</div>
<div class="t" style="left:307.9px;top:474.64px;font-size:12px;line-height:12px;color:#000;letter-spacing:0.217px">Running</div>
<div class="t" style="left:409.6px;top:474.64px;font-size:12px;line-height:12px;color:#000;letter-spacing:0.150px">Dev</div>
<div class="t r" style="left:320.5px;width:200px;top:474.64px;font-size:12px;line-height:12px;color:#000;letter-spacing:-0.7px">00</div>
<div class="t r" style="left:405.70000000000005px;width:200px;top:474.64px;font-size:12px;line-height:12px;color:#000;letter-spacing:-0.1px">2,420 K</div>
<div class="t" style="left:613px;top:474.64px;font-size:12px;line-height:12px;color:#000;letter-spacing:0.108px">Runtime Broker</div>
<svg style="left:109.5px;top:491.50px" width="16" height="13" viewBox="0 0 16 13"><path d="M1.2 8.4 L10.8 6.2 L15.4 7.6 L15.4 9.4 L5.8 12 L1.2 10.4 Z" fill="#dcdcdc" stroke="#8c8c8c" stroke-width="0.7"/><rect x="8" y="10.1" width="1.5" height="1.9" fill="#3fae2e"/><path d="M5.6 6.6 L2.4 9.4" stroke="#7a7a7a" stroke-width="1.8"/><circle cx="8" cy="4.6" r="3.6" fill="#d2e8fb" stroke="#8e8e8e" stroke-width="1"/></svg>
<div class="t" style="left:127.2px;top:492.84px;font-size:12px;line-height:12px;color:#000;letter-spacing:-0.181px">SearchIndexer.exe</div>
<div class="t" style="left:257.2px;top:492.84px;font-size:12px;line-height:12px;color:#000;letter-spacing:0.1px">4212</div>
<div class="t" style="left:307.9px;top:492.84px;font-size:12px;line-height:12px;color:#000;letter-spacing:0.217px">Running</div>
<div class="t" style="left:409.6px;top:492.84px;font-size:12px;line-height:12px;color:#000;letter-spacing:-0.900px">SYSTEM</div>
<div class="t r" style="left:320.5px;width:200px;top:492.84px;font-size:12px;line-height:12px;color:#000;letter-spacing:-0.7px">00</div>
<div class="t r" style="left:405.70000000000005px;width:200px;top:492.84px;font-size:12px;line-height:12px;color:#000;letter-spacing:-0.1px">4,776 K</div>
<div class="t" style="left:613px;top:492.84px;font-size:12px;line-height:12px;color:#000;letter-spacing:0.016px">Microsoft Windows Searc...</div>
<svg style="left:110.2px;top:509.80px" width="15" height="11" viewBox="0 0 15 11"><rect x="0.5" y="0.5" width="14" height="10" fill="#fdfdfd" stroke="#a6a6a6"/><rect x="0" y="0" width="15" height="1.3" fill="#8f8f8f"/><rect x="3.9" y="1.75" width="6.2" height="7.25" fill="#0a78d7"/><rect x="11" y="1.5" width="2.75" height="6.5" fill="#d4d4d4"/><circle cx="2.2" cy="2.6" r="0.55" fill="#9a9a9a"/><circle cx="2.2" cy="5.2" r="0.55" fill="#9a9a9a"/><circle cx="2.2" cy="7.6" r="0.55" fill="#9a9a9a"/></svg>
<div class="t" style="left:127.2px;top:511.04px;font-size:12px;line-height:12px;color:#000;letter-spacing:-0.364px">SearchUI.exe</div>
<div class="t" style="left:257.2px;top:511.04px;font-size:12px;line-height:12px;color:#000;letter-spacing:0.1px">4528</div>
<div class="t" style="left:307.9px;top:511.04px;font-size:12px;line-height:12px;color:#000;letter-spacing:0.062px">Suspended</div>
<div class="t" style="left:409.6px;top:511.04px;font-size:12px;line-height:12px;color:#000;letter-spacing:0.150px">Dev</div>
<div class="t r" style="left:320.5px;width:200px;top:511.04px;font-size:12px;line-height:12px;color:#000;letter-spacing:-0.7px">00</div>
<div class="t r" style="left:405.70000000000005px;width:200px;top:511.04px;font-size:12px;line-height:12px;color:#000;letter-spacing:-0.1px">108 K</div>
<div class="t" style="left:613px;top:511.04px;font-size:12px;line-height:12px;color:#000;letter-spacing:-0.074px">Search and Cortana applic...</div>
<svg style="left:110.2px;top:528.00px" width="15" height="11" viewBox="0 0 15 11"><rect x="0.5" y="0.5" width="14" height="10" fill="#fdfdfd" stroke="#a6a6a6"/><rect x="0" y="0" width="15" height="1.3" fill="#8f8f8f"/><rect x="3.9" y="1.75" width="6.2" height="7.25" fill="#0a78d7"/><rect x="11" y="1.5" width="2.75" height="6.5" fill="#d4d4d4"/><circle cx="2.2" cy="2.6" r="0.55" fill="#9a9a9a"/><circle cx="2.2" cy="5.2" r="0.55" fill="#9a9a9a"/><circle cx="2.2" cy="7.6" r="0.55" fill="#9a9a9a"/></svg>
<div class="t" style="left:127.2px;top:529.24px;font-size:12px;line-height:12px;color:#000;letter-spacing:-0.113px">SecurityHealthService...</div>
<div class="t" style="left:257.2px;top:529.24px;font-size:12px;line-height:12px;color:#000;letter-spacing:0.1px">2608</div>
<div class="t" style="left:307.9px;top:529.24px;font-size:12px;line-height:12px;color:#000;letter-spacing:0.217px">Running</div>
<div class="t" style="left:409.6px;top:529.24px;font-size:12px;line-height:12px;color:#000;letter-spacing:-0.900px">SYSTEM</div>
<div class="t r" style="left:320.5px;width:200px;top:529.24px;font-size:12px;line-height:12px;color:#000;letter-spacing:-0.7px">00</div>
<div class="t r" style="left:405.70000000000005px;width:200px;top:529.24px;font-size:12px;line-height:12px;color:#000;letter-spacing:-0.1px">2,116 K</div>
<div class="t" style="left:613px;top:529.24px;font-size:12px;line-height:12px;color:#000;letter-spacing:0.000px">Windows Security Health ...</div>
<svg style="left:110.2px;top:546.20px" width="15" height="11" viewBox="0 0 15 11"><rect x="0.5" y="0.5" width="14" height="10" fill="#fdfdfd" stroke="#a6a6a6"/><rect x="0" y="0" width="15" height="1.3" fill="#8f8f8f"/><rect x="3.9" y="1.75" width="6.2" height="7.25" fill="#0a78d7"/><rect x="11" y="1.5" width="2.75" height="6.5" fill="#d4d4d4"/><circle cx="2.2" cy="2.6" r="0.55" fill="#9a9a9a"/><circle cx="2.2" cy="5.2" r="0.55" fill="#9a9a9a"/><circle cx="2.2" cy="7.6" r="0.55" fill="#9a9a9a"/></svg>
<div class="t" style="left:127.2px;top:547.44px;font-size:12px;line-height:12px;color:#000;letter-spacing:-0.355px">services.exe</div>
<div class="t" style="left:257.2px;top:547.44px;font-size:12px;line-height:12px;color:#000;letter-spacing:0.1px">796</div>
<div class="t" style="left:307.9px;top:547.44px;font-size:12px;line-height:12px;color:#000;letter-spacing:0.217px">Running</div>
<div class="t" style="left:409.6px;top:547.44px;font-size:12px;line-height:12px;color:#000;letter-spacing:-0.900px">SYSTEM</div>
<div class="t r" style="left:320.5px;width:200px;top:547.44px;font-size:12px;line-height:12px;color:#000;letter-spacing:-0.7px">00</div>
<div class="t r" style="left:405.70000000000005px;width:200px;top:547.44px;font-size:12px;line-height:12px;color:#000;letter-spacing:-0.1px">2,256 K</div>
<div class="t" style="left:613px;top:547.44px;font-size:12px;line-height:12px;color:#000;letter-spacing:0.038px">Services and Controller app</div>
<svg style="left:110.2px;top:564.40px" width="15" height="11" viewBox="0 0 15 11"><rect x="0.5" y="0.5" width="14" height="10" fill="#fdfdfd" stroke="#a6a6a6"/><rect x="0" y="0" width="15" height="1.3" fill="#8f8f8f"/><rect x="3.9" y="1.75" width="6.2" height="7.25" fill="#0a78d7"/><rect x="11" y="1.5" width="2.75" height="6.5" fill="#d4d4d4"/><circle cx="2.2" cy="2.6" r="0.55" fill="#9a9a9a"/><circle cx="2.2" cy="5.2" r="0.55" fill="#9a9a9a"/><circle cx="2.2" cy="7.6" r="0.55" fill="#9a9a9a"/></svg>
<div class="t" style="left:127.2px;top:565.64px;font-size:12px;line-height:12px;color:#000;letter-spacing:-0.186px">ShellExperienceHost....</div>
<div class="t" style="left:257.2px;top:565.64px;font-size:12px;line-height:12px;color:#000;letter-spacing:0.1px">4320</div>
<div class="t" style="left:307.9px;top:565.64px;font-size:12px;line-height:12px;color:#000;letter-spacing:0.062px">Suspended</div>
<div class="t" style="left:409.6px;top:565.64px;font-size:12px;line-height:12px;color:#000;letter-spacing:0.150px">Dev</div>
<div class="t r" style="left:320.5px;width:200px;top:565.64px;font-size:12px;line-height:12px;color:#000;letter-spacing:-0.7px">00</div>
<div class="t r" style="left:405.70000000000005px;width:200px;top:565.64px;font-size:12px;line-height:12px;color:#000;letter-spacing:-0.1px">40 K</div>
<div class="t" style="left:613px;top:565.64px;font-size:12px;line-height:12px;color:#000;letter-spacing:-0.115px">Windows Shell Experience...</div>
<svg style="left:110.2px;top:582.60px" width="15" height="11" viewBox="0 0 15 11"><rect x="0.5" y="0.5" width="14" height="10" fill="#fdfdfd" stroke="#a6a6a6"/><rect x="0" y="0" width="15" height="1.3" fill="#8f8f8f"/><rect x="3.9" y="1.75" width="6.2" height="7.25" fill="#0a78d7"/><rect x="11" y="1.5" width="2.75" height="6.5" fill="#d4d4d4"/><circle cx="2.2" cy="2.6" r="0.55" fill="#9a9a9a"/><circle cx="2.2" cy="5.2" r="0.55" fill="#9a9a9a"/><circle cx="2.2" cy="7.6" r="0.55" fill="#9a9a9a"/></svg>
<div class="t" style="left:127.2px;top:583.84px;font-size:12px;line-height:12px;color:#000;letter-spacing:-0.267px">sihost.exe</div>
<div class="t" style="left:257.2px;top:583.84px;font-size:12px;line-height:12px;color:#000;letter-spacing:0.1px">2408</div>
<div class="t" style="left:307.9px;top:583.84px;font-size:12px;line-height:12px;color:#000;letter-spacing:0.217px">Running</div>
<div class="t" style="left:409.6px;top:583.84px;font-size:12px;line-height:12px;color:#000;letter-spacing:0.150px">Dev</div>
<div class="t r" style="left:320.5px;width:200px;top:583.84px;font-size:12px;line-height:12px;color:#000;letter-spacing:-0.7px">00</div>
<div class="t r" style="left:405.70000000000005px;width:200px;top:583.84px;font-size:12px;line-height:12px;color:#000;letter-spacing:-0.1px">4,320 K</div>
<div class="t" style="left:613px;top:583.84px;font-size:12px;line-height:12px;color:#000;letter-spacing:0.071px">Shell Infrastructure Host</div>
<svg style="left:110.2px;top:600.80px" width="15" height="11" viewBox="0 0 15 11"><rect x="0.5" y="0.5" width="14" height="10" fill="#fdfdfd" stroke="#a6a6a6"/><rect x="0" y="0" width="15" height="1.3" fill="#8f8f8f"/><rect x="3.9" y="1.75" width="6.2" height="7.25" fill="#0a78d7"/><rect x="11" y="1.5" width="2.75" height="6.5" fill="#d4d4d4"/><circle cx="2.2" cy="2.6" r="0.55" fill="#9a9a9a"/><circle cx="2.2" cy="5.2" r="0.55" fill="#9a9a9a"/><circle cx="2.2" cy="7.6" r="0.55" fill="#9a9a9a"/></svg>
<div class="t" style="left:127.2px;top:602.04px;font-size:12px;line-height:12px;color:#000;letter-spacing:-0.160px">SkypeHost.exe</div>
<div class="t" style="left:257.2px;top:602.04px;font-size:12px;line-height:12px;color:#000;letter-spacing:0.1px">5640</div>
<div class="t" style="left:307.9px;top:602.04px;font-size:12px;line-height:12px;color:#000;letter-spacing:0.062px">Suspended</div>
<div class="t" style="left:409.6px;top:602.04px;font-size:12px;line-height:12px;color:#000;letter-spacing:0.150px">Dev</div>
<div class="t r" style="left:320.5px;width:200px;top:602.04px;font-size:12px;line-height:12px;color:#000;letter-spacing:-0.7px">00</div>
<div class="t r" style="left:405.70000000000005px;width:200px;top:602.04px;font-size:12px;line-height:12px;color:#000;letter-spacing:-0.1px">40 K</div>
<div class="t" style="left:613px;top:602.04px;font-size:12px;line-height:12px;color:#000;letter-spacing:-0.149px">Microsoft Skype</div>
<div class="ln" style="left:104px;top:373px;width:666px;height:51px;border:5px solid #afe31c"></div>
</body></html>
